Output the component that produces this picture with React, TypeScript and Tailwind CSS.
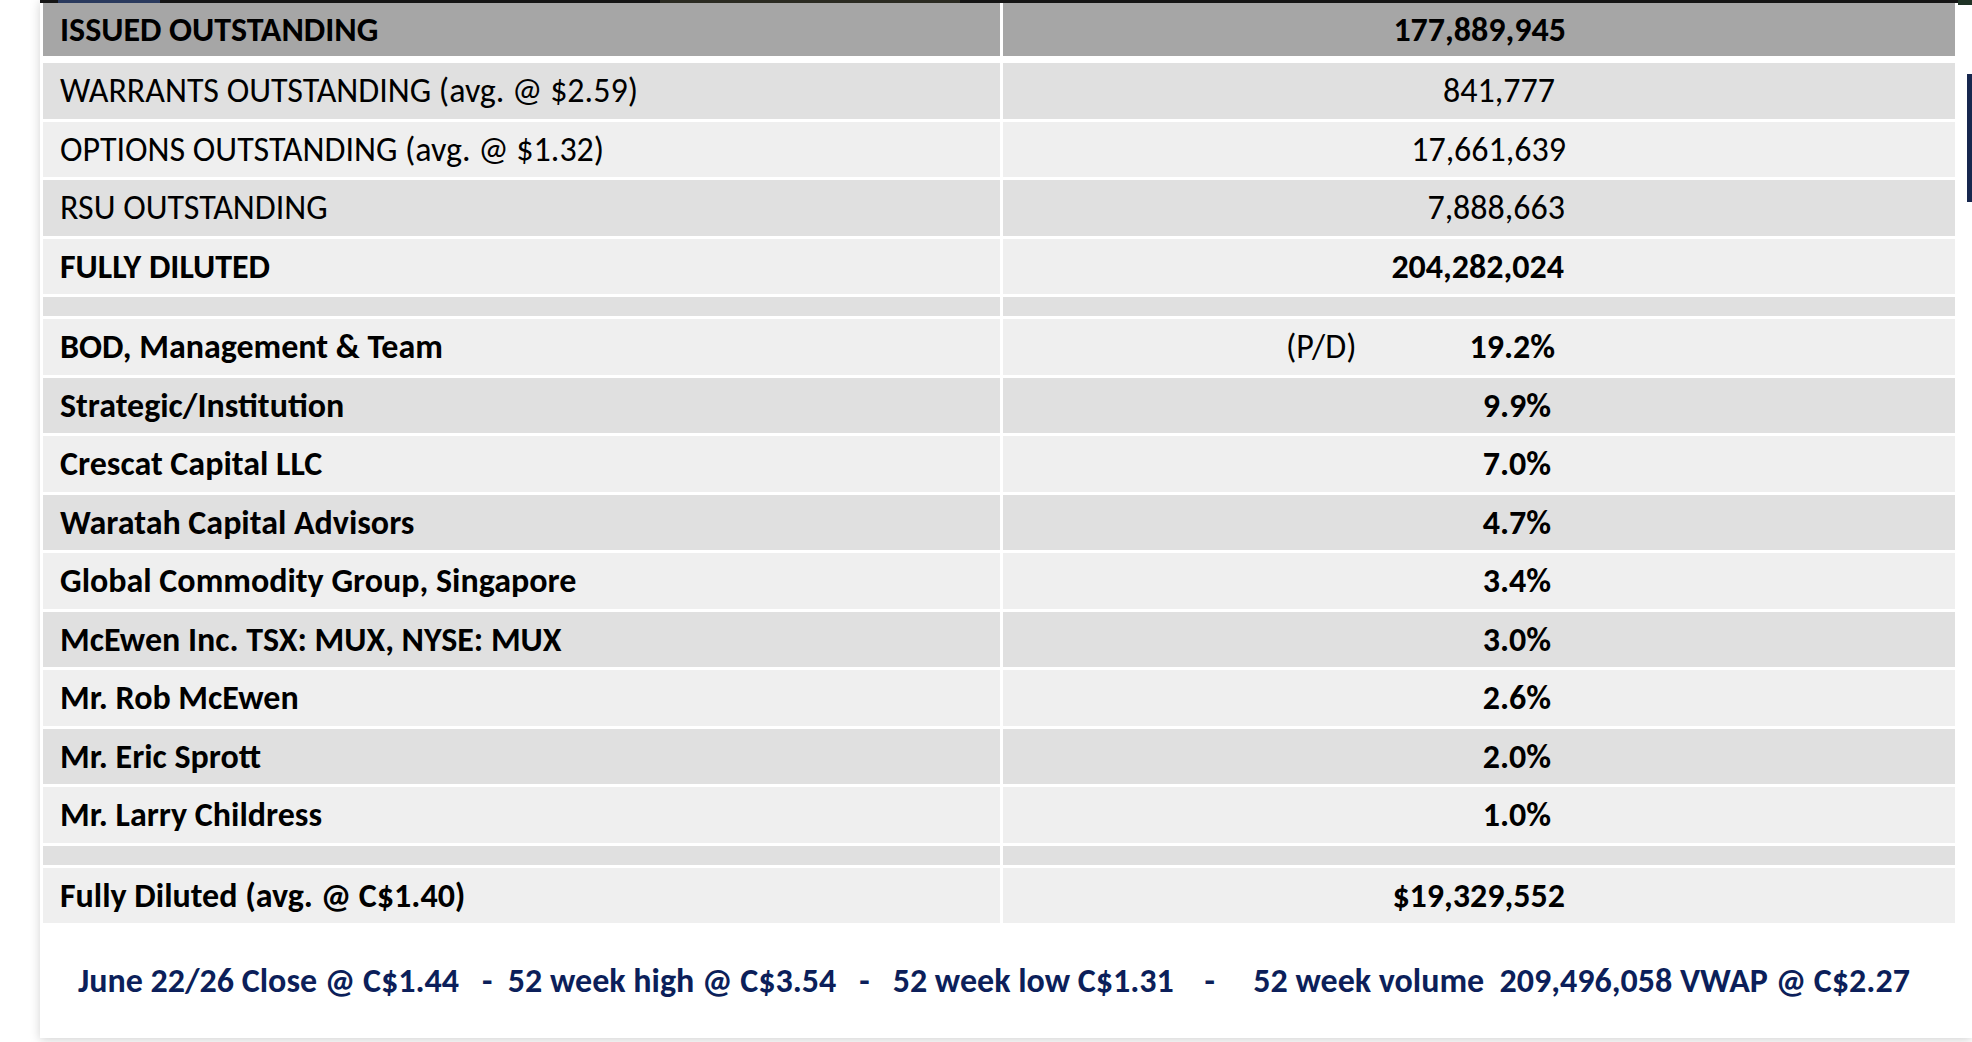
const font = "font-['Carlito','Calibri','Liberation_Sans_Narrow','Open_Sans',sans-serif]";

type Row = { label: string; value: string; bold?: boolean; shade: "dark" | "light"; pr: string; note?: string };

const topRows: Row[] = [
  { label: "WARRANTS OUTSTANDING (avg. @ $2.59)", value: "841,777", shade: "dark", pr: "pr-[400px]" },
  { label: "OPTIONS OUTSTANDING (avg. @ $1.32)", value: "17,661,639", shade: "light", pr: "pr-[389px]" },
  { label: "RSU OUTSTANDING", value: "7,888,663", shade: "dark", pr: "pr-[390px]" },
  { label: "FULLY DILUTED", value: "204,282,024", bold: true, shade: "light", pr: "pr-[391px]" },
];

const holders: Row[] = [
  { label: "BOD, Management & Team", value: "19.2%", bold: true, shade: "light", pr: "pr-[400px]", note: "(P/D)" },
  { label: "Strategic/Institution", value: "9.9%", bold: true, shade: "dark", pr: "pr-[404px]" },
  { label: "Crescat Capital LLC", value: "7.0%", bold: true, shade: "light", pr: "pr-[404px]" },
  { label: "Waratah Capital Advisors", value: "4.7%", bold: true, shade: "dark", pr: "pr-[404px]" },
  { label: "Global Commodity Group, Singapore", value: "3.4%", bold: true, shade: "light", pr: "pr-[404px]" },
  { label: "McEwen Inc. TSX: MUX, NYSE: MUX", value: "3.0%", bold: true, shade: "dark", pr: "pr-[404px]" },
  { label: "Mr. Rob McEwen", value: "2.6%", bold: true, shade: "light", pr: "pr-[404px]" },
  { label: "Mr. Eric Sprott", value: "2.0%", bold: true, shade: "dark", pr: "pr-[404px]" },
  { label: "Mr. Larry Childress", value: "1.0%", bold: true, shade: "light", pr: "pr-[404px]" },
];

function TableRow({ row }: { row: Row }) {
  const bg = row.shade === "dark" ? "bg-[#e0e0e0]" : "bg-[#efefef]";
  const weight = row.bold ? "font-bold" : "font-normal";
  return (
    <div className="flex h-[55.5px] gap-[3px]">
      <div className={`flex w-[957px] items-center pl-[17px] ${bg}`}>
        <span className={weight}>{row.label}</span>
      </div>
      <div className={`relative flex flex-1 items-center justify-end ${row.pr} ${bg}`}>
        {row.note && <span className="absolute left-[283px] font-normal">{row.note}</span>}
        <span className={weight}>{row.value}</span>
      </div>
    </div>
  );
}

function BlankRow() {
  return (
    <div className="flex h-[19px] gap-[3px]">
      <div className="w-[957px] bg-[#e0e0e0]" />
      <div className="flex-1 bg-[#e0e0e0]" />
    </div>
  );
}

export default function App() {
  return (
    <div className={`relative h-[1042px] w-[1972px] overflow-hidden bg-white text-[34px] text-black ${font}`}>
      <div className="ml-[40px] h-[1038px] bg-white shadow-[0_2px_10px_rgba(0,0,0,0.18)]">
        <div className="flex h-[3px] bg-[#151515]">
          <div className="ml-[18px] w-[102px] bg-[#2a3a5e]" />
          <div className="ml-[500px] w-[300px] bg-[#2b2b22]" />
        </div>
        <div className="ml-[3px] w-[1912px] flex flex-col">
          <div className="flex h-[53px] gap-[3px]">
            <div className="flex w-[957px] items-center bg-[#a6a6a6] pl-[17px]">
              <span className="font-bold">ISSUED OUTSTANDING</span>
            </div>
            <div className="flex flex-1 items-center justify-end bg-[#a6a6a6] pr-[389px]">
              <span className="font-bold">177,889,945</span>
            </div>
          </div>
          <div className="mt-[7px] flex flex-col gap-[3px]">
            {topRows.map((r) => (
              <TableRow key={r.label} row={r} />
            ))}
            <BlankRow />
            {holders.map((r) => (
              <TableRow key={r.label} row={r} />
            ))}
            <BlankRow />
            <TableRow
              row={{ label: "Fully Diluted (avg. @ C$1.40)", value: "$19,329,552", bold: true, shade: "light", pr: "pr-[390px]" }}
            />
          </div>
          <div className="flex h-[115px] items-center pl-[35px] text-[#0c1f5a] font-bold whitespace-pre">
            {"June 22/26 Close @ C$1.44   -  52 week high @ C$3.54   -   52 week low C$1.31    -     52 week volume  209,496,058 VWAP @ C$2.27"}
          </div>
        </div>
      </div>
      <div className="absolute right-0 top-0 h-[5px] w-[14px] bg-[#1f3326]" />
      <div className="absolute right-0 top-[74px] h-[128px] w-[5px] bg-[#17284f]" />
    </div>
  );
}
